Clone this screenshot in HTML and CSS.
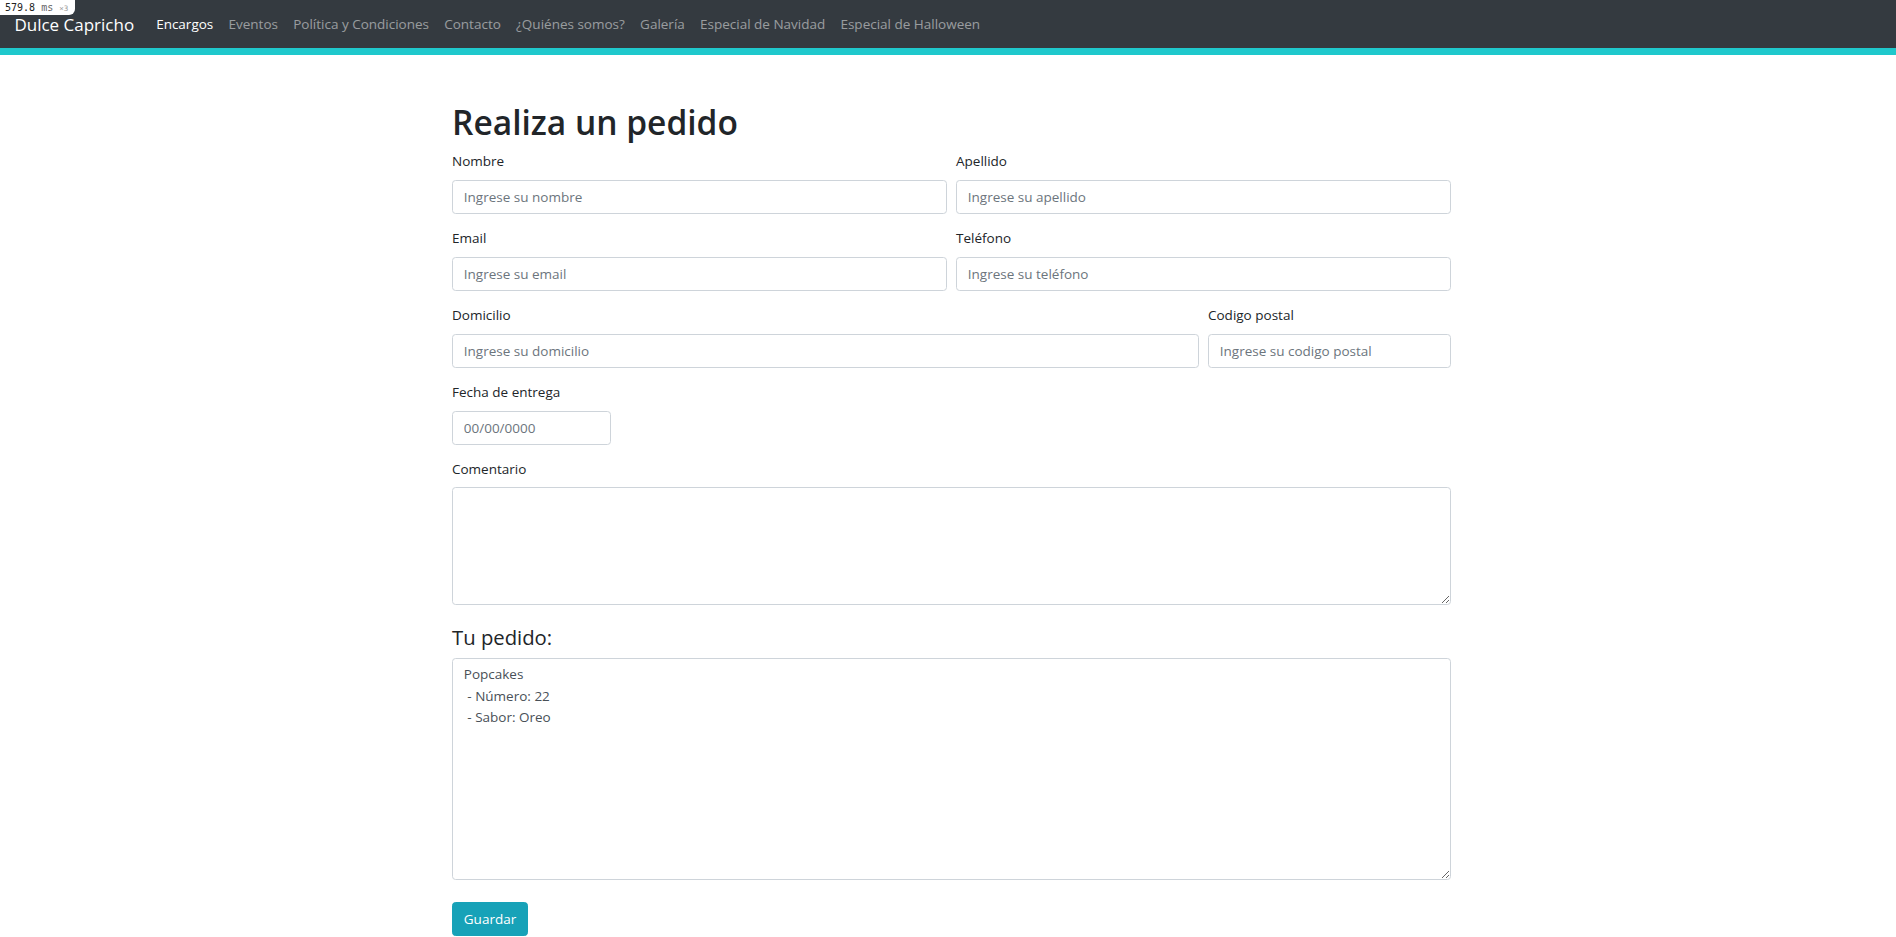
FILE: index.html
```html
<!DOCTYPE html>
<html lang="es">
<head>
<meta charset="utf-8">
<title>Dulce Capricho - Encargos</title>
<link rel="stylesheet" href="styles.css">
</head>
<body>
<div class="perf"><span class="perf-num">579.8</span> <span class="perf-unit">ms</span> <span class="perf-x">×3</span></div>
<nav class="navbar">
  <a class="brand" href="#">Dulce Capricho</a>
  <ul class="nav">
    <li><a class="nav-link active" href="#">Encargos</a></li>
    <li><a class="nav-link" href="#">Eventos</a></li>
    <li><a class="nav-link" href="#">Política y Condiciones</a></li>
    <li><a class="nav-link" href="#">Contacto</a></li>
    <li><a class="nav-link" href="#">¿Quiénes somos?</a></li>
    <li><a class="nav-link" href="#">Galería</a></li>
    <li><a class="nav-link" href="#">Especial de Navidad</a></li>
    <li><a class="nav-link" href="#">Especial de Halloween</a></li>
  </ul>
</nav>
<main class="container">
  <h1 class="title">Realiza un pedido</h1>
  <form class="form">
    <div class="row row-half">
      <div class="group">
        <label class="label" for="nombre">Nombre</label>
        <input class="control" id="nombre" type="text" placeholder="Ingrese su nombre">
      </div>
      <div class="group">
        <label class="label" for="apellido">Apellido</label>
        <input class="control" id="apellido" type="text" placeholder="Ingrese su apellido">
      </div>
    </div>
    <div class="row row-half">
      <div class="group">
        <label class="label" for="email">Email</label>
        <input class="control" id="email" type="text" placeholder="Ingrese su email">
      </div>
      <div class="group">
        <label class="label" for="telefono">Teléfono</label>
        <input class="control" id="telefono" type="text" placeholder="Ingrese su teléfono">
      </div>
    </div>
    <div class="row row-wide">
      <div class="group">
        <label class="label" for="domicilio">Domicilio</label>
        <input class="control" id="domicilio" type="text" placeholder="Ingrese su domicilio">
      </div>
      <div class="group">
        <label class="label" for="cp">Codigo postal</label>
        <input class="control" id="cp" type="text" placeholder="Ingrese su codigo postal">
      </div>
    </div>
    <div class="group group-date">
      <label class="label" for="fecha">Fecha de entrega</label>
      <input class="control" id="fecha" type="text" placeholder="00/00/0000">
    </div>
    <div class="group">
      <label class="label" for="comentario">Comentario</label>
      <textarea class="control area-comment" id="comentario"></textarea>
    </div>
    <h4 class="subtitle">Tu pedido:</h4>
    <div class="group group-last">
      <textarea class="control area-order" id="pedido">Popcakes
 - Número: 22
 - Sabor: Oreo</textarea>
    </div>
    <button class="btn" type="button">Guardar</button>
  </form>
</main>
</body>
</html>
```
FILE: styles.css
```css
* { box-sizing: border-box; }
html, body { margin: 0; padding: 0; }
body {
  font-family: "Open Sans", "Liberation Sans", sans-serif;
  font-size: 13.5px;
  line-height: 21.6px;
  color: #212529;
  background: #fff;
  overflow: hidden;
}
.perf {
  position: absolute;
  top: 0;
  left: 0;
  z-index: 10;
  background: #fff;
  border-bottom-right-radius: 6px;
  padding: 0 7px 0 5px;
  height: 15px;
  line-height: 15px;
  font-family: "DejaVu Sans Mono", monospace;
  font-size: 10px;
  color: #222;
  white-space: nowrap;
}
.perf-unit { color: #666; }
.perf-x { color: #999; font-size: 7.5px; }

.navbar {
  display: flex;
  align-items: center;
  height: 55px;
  padding: 1px 14.4px 0;
  background: #343a40;
  border-bottom: 7px solid #1fc8cc;
}
.brand {
  font-size: 17px;
  color: #fff;
  text-decoration: none;
  margin-right: 14.4px;
  line-height: 27px;
}
.nav {
  display: flex;
  list-style: none;
  margin: 0;
  padding: 0;
}
.nav-link {
  display: block;
  padding: 0 7.6px;
  color: rgba(255, 255, 255, 0.5);
  text-decoration: none;
}
.nav-link.active { color: #fff; }

.container {
  width: 999px;
  margin: 0 auto;
  padding-top: 46px;
  position: relative;
  left: 3.5px;
}
.title {
  font-size: 33.5px;
  font-weight: 600;
  line-height: 43.2px;
  margin: 0 0 7.2px;
}
.row {
  display: grid;
  column-gap: 9px;
}
.row-half { grid-template-columns: 1fr 1fr; }
.row-wide { grid-template-columns: 747fr 243fr; }
.group { margin-bottom: 14px; }
.group-date { width: 159px; }
.group-last { margin-bottom: 0; }
.label {
  display: block;
  margin-bottom: 7.2px;
}
.control {
  display: block;
  width: 100%;
  height: 34px;
  padding: 5.4px 10.8px;
  font-family: inherit;
  font-size: 13.5px;
  line-height: 21.6px;
  color: #495057;
  background: #fff;
  border: 1px solid #ced4da;
  border-radius: 3.6px;
  outline: none;
}
.control::placeholder { color: #6c757d; opacity: 1; }
.area-comment { height: 118px; resize: vertical; }
.area-order { height: 222px; resize: vertical; }
.subtitle {
  font-size: 20.3px;
  font-weight: 500;
  line-height: 25.9px;
  margin: 19.5px 0 7.2px;
}
.btn {
  display: block;
  margin-top: 22px;
  height: 34px;
  padding: 0 10.8px;
  font-family: inherit;
  font-size: 13.5px;
  color: #fff;
  background: #17a2b8;
  border: 1px solid #17a2b8;
  border-radius: 3.6px;
}
```
